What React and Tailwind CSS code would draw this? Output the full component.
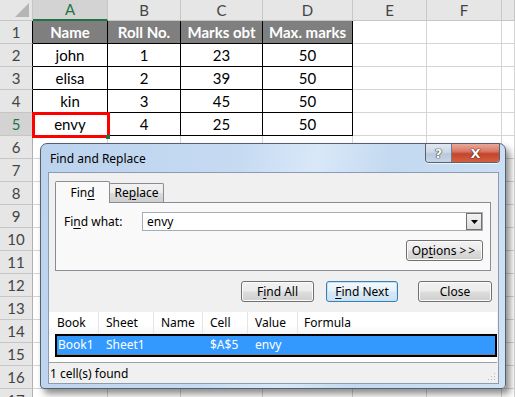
import React from 'react';

const COLS = [
  { label: '', w: 33 },
  { label: 'A', active: true },
  { label: 'B' },
  { label: 'C' },
  { label: 'D' },
  { label: 'E' },
  { label: 'F' },
  { label: '' },
];

const DATA = [
  ['Name', 'Roll No.', 'Marks obt', 'Max. marks'],
  ['john', '1', '23', '50'],
  ['elisa', '2', '39', '50'],
  ['kin', '3', '45', '50'],
  ['envy', '4', '25', '50'],
];

function U({ children }) {
  return <span className="underline underline-offset-[2px] decoration-[1px]">{children}</span>;
}

function WinButton({ children, w, primary }) {
  return (
    <div
      className={
        'h-[21px] rounded-[3px] border flex items-center justify-center text-[12px] text-black ' +
        (primary
          ? 'border-[#3c7fb1] bg-[linear-gradient(180deg,#f4f9fd_0%,#e6f1fa_48%,#d6e8f6_52%,#cde2f3_100%)] shadow-[inset_0_0_0_1px_#bfe3f8]'
          : 'border-[#707070] bg-[linear-gradient(180deg,#f2f2f2_0%,#ebebeb_48%,#dddddd_52%,#cfcfcf_100%)] shadow-[inset_0_0_0_1px_#fbfbfb]')
      }
      style={{ width: w }}
    >
      {children}
    </div>
  );
}

function Sheet() {
  const rows = [];
  const header = COLS.map((c, i) => {
    if (i === 0) {
      return (
        <div key="corner" className="relative bg-[#e6e6e6] border-r border-b border-[#c6c6c6]">
          <svg className="absolute right-[3px] bottom-[3px]" width="14" height="14" viewBox="0 0 14 14">
            <polygon points="14,0 14,14 0,14" fill="#b5b5b5" />
          </svg>
        </div>
      );
    }
    return (
      <div
        key={'h' + i}
        className={
          'flex items-center justify-center text-[15px] border-r ' +
          (c.active
            ? 'bg-[#d3d3d3] text-[#217346] border-b-2 border-b-[#217346] border-r-[#c6c6c6]'
            : 'bg-[#e6e6e6] text-[#444] border-b border-[#c6c6c6]')
        }
      >
        {c.label}
      </div>
    );
  });
  rows.push(...header);

  for (let r = 1; r <= 17; r++) {
    const inTable = r <= 5;
    rows.push(
      <div
        key={'rh' + r}
        className={
          'flex items-center justify-center text-[15px] border-b border-b-[#c6c6c6] border-r ' +
          (r === 5 ? 'bg-[#d3d3d3] text-[#217346] ' : 'bg-[#e6e6e6] text-[#444] ') +
          (inTable ? 'border-r-black' : 'border-r-[#b0b0b0]')
        }
      >
        {r}
      </div>
    );
    for (let c = 1; c <= 7; c++) {
      const inT = inTable && c <= 4;
      const isHead = r === 1 && c <= 4;
      const text = inT ? DATA[r - 1][c - 1] : '';
      rows.push(
        <div
          key={r + '-' + c}
          className={
            'flex items-center justify-center text-[15px] whitespace-nowrap overflow-hidden border-r border-b ' +
            (inT ? 'border-black ' : 'border-[#d4d4d4] ') +
            (isHead ? 'bg-[#7f7f7f] text-white font-bold' : 'bg-white text-black')
          }
        >
          {text}
        </div>
      );
    }
  }

  return (
    <div className="grid grid-cols-[33px_75px_73px_82px_90px_74px_75px_13px] grid-rows-[21px_repeat(17,23px)] font-['Lato','Liberation_Sans',sans-serif]">
      {rows}
    </div>
  );
}

function Dialog() {
  return (
    <div className="absolute left-[40px] top-[143px] w-[466px] h-[246px] flex flex-col rounded-t-[7px] rounded-b-[4px] border border-[#56606c] bg-[linear-gradient(100deg,#bcd3ee_0%,#c6dbf2_40%,#d9e8f8_55%,#c3d9f0_70%,#cfe1f5_100%)] shadow-[4px_5px_7px_rgba(0,0,0,0.45)] font-['Noto_Sans','Open_Sans',sans-serif] text-[12px] text-black">
      <div className="h-[28px] flex items-start shrink-0">
        <div className="pl-[9px] pt-[7px] leading-[16px] text-[12px]">Find and Replace</div>
        <div className="ml-auto mr-[5px] flex border border-t-0 border-[#58636f] rounded-b-[4px] overflow-hidden shadow-[0_1px_0_rgba(255,255,255,0.7)]">
          <div className="w-[26px] h-[18px] flex items-center justify-center bg-[linear-gradient(180deg,#dfe7f1_0%,#cdd9e7_45%,#b9c9db_55%,#c6d5e6_100%)] border-r border-[#6d7a89]">
            <span className="font-['DejaVu_Sans',sans-serif] font-bold text-[13px] leading-none text-white [text-shadow:0_0_1px_#333,0_0_1px_#333,0_0_1px_#333]">?</span>
          </div>
          <div className="w-[47px] h-[18px] flex items-center justify-center bg-[linear-gradient(180deg,#e9a899_0%,#d97a67_40%,#c3452d_55%,#d4613f_100%)]">
            <span className="font-['DejaVu_Sans',sans-serif] font-bold text-[13px] leading-none text-white [text-shadow:0_0_1px_#4a1a10,0_0_1px_#4a1a10,0_0_1px_#4a1a10]">X</span>
          </div>
        </div>
      </div>

      <div className="ml-[7px] mr-[6px] mb-[4px] h-[212px] border border-[#8b9bb0] bg-[#f0f0f0] flex flex-col">
        <div className="pt-[8px] pl-[6px] pr-[7px]">
          <div className="h-[21px] flex items-end">
            <div className="relative z-10 h-[22px] w-[55px] -mb-[1px] border border-b-0 border-[#898c95] bg-[#f9f9f9] rounded-t-[2px] flex items-center justify-center">
              <span>
                Fin<U>d</U>
              </span>
            </div>
            <div className="h-[19px] w-[55px] -ml-[1px] border border-b-0 border-[#898c95] rounded-t-[2px] bg-[linear-gradient(180deg,#f2f2f2_0%,#ebebeb_50%,#dbdbdb_51%,#cfcfcf_100%)] flex items-center justify-center">
              <span>
                Re<U>p</U>lace
              </span>
            </div>
          </div>
          <div className="h-[69px] border border-[#898c95] bg-[#f9f9f9] pl-[8px] pr-[7px] pt-[9px]">
            <div className="flex items-center h-[19px]">
              <div className="w-[78px]">
                Fi<U>n</U>d what:
              </div>
              <div className="w-[341px] h-[19px] border border-[#a5acb5] bg-white flex items-center pl-[4px]">
                <span className="flex-1">envy</span>
                <div className="w-[16px] h-[17px] border border-[#707070] bg-[linear-gradient(180deg,#f2f2f2_0%,#dcdcdc_100%)] flex items-center justify-center">
                  <svg width="7" height="4" viewBox="0 0 7 4">
                    <polygon points="0,0 7,0 3.5,4" fill="#000" />
                  </svg>
                </div>
              </div>
            </div>
            <div className="mt-[9px] flex justify-end">
              <WinButton w={77}>
                <span>
                  Op<U>t</U>ions <span className="tracking-[2px]">&gt;&gt;</span>
                </span>
              </WinButton>
            </div>
          </div>
        </div>

        <div className="mt-[10px] pr-[6px] flex justify-end">
          <WinButton w={73}>
            <span>
              F<U>i</U>nd All
            </span>
          </WinButton>
          <div className="w-[12px]" />
          <WinButton w={72} primary>
            <span>
              <U>F</U>ind Next
            </span>
          </WinButton>
          <div className="w-[20px]" />
          <WinButton w={74}>Close</WinButton>
        </div>

        <div className="mt-[10px] mr-[1px] h-[53px] bg-white border-b border-[#a0a0a0] flex flex-col">
          <div className="h-[22px] flex items-center bg-[linear-gradient(180deg,#ffffff_0%,#ffffff_60%,#f4f5f7_100%)]">
            {[
              ['Book', 50, 8],
              ['Sheet', 55, 7],
              ['Name', 49, 7],
              ['Cell', 45, 7],
              ['Value', 50, 7],
              ['Formula', 0, 6],
            ].map(([t, w, pl]) => (
              <div
                key={t}
                className={'h-full flex items-center ' + (w ? 'border-r border-[#e3e5e8]' : 'flex-1')}
                style={{ width: w || undefined, paddingLeft: pl }}
              >
                {t}
              </div>
            ))}
          </div>
          <div className="ml-[6px] h-[23px] border-2 border-black bg-[#3399ff] text-white flex items-center">
            <div className="h-full w-full flex items-center border-b border-dotted border-[#b26a2a]">
              <div className="w-[42px] pl-[1px]">Book1</div>
              <div className="w-[55px] pl-[7px]">Sheet1</div>
              <div className="w-[49px]" />
              <div className="w-[45px] pl-[7px]">$A$5</div>
              <div className="w-[50px] pl-[7px]">envy</div>
            </div>
          </div>
        </div>

        <div className="flex-1 flex items-center pl-[1px] pt-[2px]">
          <span>1 cell(s) found</span>
          <svg className="ml-auto mr-[2px] self-end mb-[2px]" width="8" height="8" viewBox="0 0 8 8">
            <rect x="6" y="0" width="1" height="1" fill="#b8b8b8" />
            <rect x="3" y="3" width="1" height="1" fill="#b8b8b8" />
            <rect x="6" y="3" width="1" height="1" fill="#b8b8b8" />
            <rect x="0" y="6" width="1" height="1" fill="#b8b8b8" />
            <rect x="3" y="6" width="1" height="1" fill="#b8b8b8" />
            <rect x="6" y="6" width="1" height="1" fill="#b8b8b8" />
          </svg>
        </div>
      </div>
    </div>
  );
}

export default function App() {
  return (
    <div className="relative w-[515px] h-[397px] overflow-hidden bg-white">
      <Sheet />
      <div className="absolute left-[32px] top-[112px] w-[78px] h-[26px] border-[3px] border-[#ff0000]" />
      <div className="absolute left-[106px] top-[135px] w-[4px] h-[4px] bg-[#217346]" />
      <Dialog />
    </div>
  );
}
